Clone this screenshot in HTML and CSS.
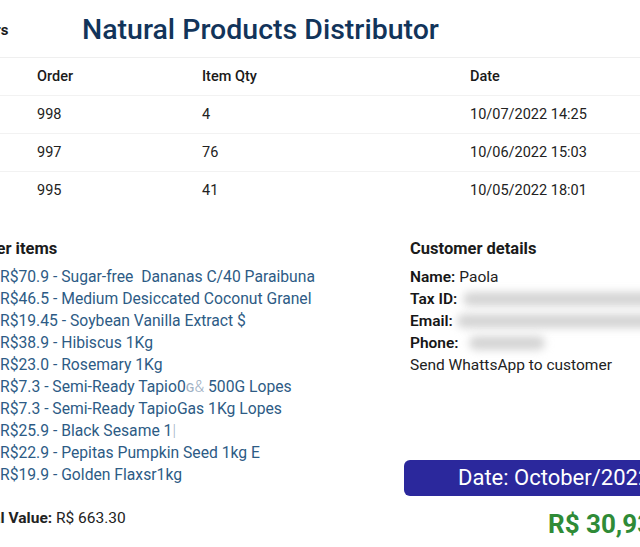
FILE: index.html
```html
<!DOCTYPE html>
<html>
<head>
<meta charset="utf-8">
<link rel="stylesheet" href="styles.css">
</head>
<body>
<div class="page">
  <header class="header">
    <span class="nav-label">Orders</span>
    <h1 class="title">Natural Products Distributor</h1>
  </header>
  <div class="table">
    <div class="row head">
      <span>Order</span><span>Item Qty</span><span>Date</span>
    </div>
    <div class="row">
      <span>998</span><span>4</span><span>10/07/2022 14:25</span>
    </div>
    <div class="row">
      <span>997</span><span>76</span><span>10/06/2022 15:03</span>
    </div>
    <div class="row">
      <span>995</span><span>41</span><span>10/05/2022 18:01</span>
    </div>
  </div>
  <div class="sections">
    <section class="left">
      <h2 class="heading">Order items</h2>
      <ul class="items">
        <li>R$70.9 - Sugar-free&nbsp; Dananas C/40 Paraibuna</li>
        <li>R$46.5 - Medium Desiccated Coconut Granel</li>
        <li>R$19.45 - Soybean Vanilla Extract $</li>
        <li>R$38.9 - Hibiscus 1Kg</li>
        <li>R$23.0 - Rosemary 1Kg</li>
        <li>R$7.3 - Semi-Ready Tapio0<span class="faint">ɢ&amp;</span> 500G Lopes</li>
        <li>R$7.3 - Semi-Ready TapioGas 1Kg Lopes</li>
        <li>R$25.9 - Black Sesame 1<span class="faint">|</span></li>
        <li>R$22.9 - Pepitas Pumpkin Seed 1kg E</li>
        <li>R$19.9 - Golden Flaxsr1kg</li>
      </ul>
      <p class="total"><b>Total Value:</b> R$ 663.30</p>
    </section>
    <section class="right">
      <div class="details">
        <h2 class="heading">Customer details</h2>
        <p class="line"><b>Name:</b> Paola</p>
        <p class="line"><b>Tax ID:</b> <span class="blur wide"></span></p>
        <p class="line"><b>Email:</b> <span class="blur wide2"></span></p>
        <p class="line"><b>Phone:</b> <span class="blur short"></span></p>
        <p class="line">Send WhattsApp to customer</p>
      </div>
      <div class="banner">Date: October/2022</div>
      <div class="amount">R$ 30,932.00</div>
    </section>
  </div>
</div>
</body>
</html>
```
FILE: styles.css
```css
html, body {
  margin: 0;
  padding: 0;
  background: #fff;
  overflow: hidden;
  width: 640px;
  height: 547px;
}
body {
  font-family: Roboto, "Liberation Sans", sans-serif;
  color: #1f1f1f;
}
.page {
  width: 900px;
  margin-left: -40px;
}
.header {
  display: flex;
  align-items: center;
  height: 57px;
  border-bottom: 1px solid #efefef;
}
.nav-label {
  width: 122px;
  font-size: 15px;
  font-weight: 700;
  color: #1b1b1b;
  text-indent: 3px;
  padding-top: 2px;
}
.title {
  margin: 0;
  padding-top: 2px;
  font-size: 28.5px;
  font-weight: 500;
  color: #12345a;
  letter-spacing: 0;
}
.table {
  display: flex;
  flex-direction: column;
}
.row {
  display: grid;
  grid-template-columns: 165px 268px 1fr;
  padding-left: 77px;
  height: 37px;
  align-items: center;
  font-size: 14.5px;
  color: #222;
  border-bottom: 1px solid #f2f2f2;
}
.row:last-child {
  border-bottom: none;
}
.row.head {
  font-weight: 500;
  color: #1a1a1a;
}
.sections {
  display: flex;
  margin-top: 29px;
}
.left {
  width: 434px;
  padding-left: 10px;
}
.right {
  flex: 1;
}
.heading {
  margin: 0;
  font-size: 16.5px;
  font-weight: 700;
  line-height: 22px;
  color: #1b1b1b;
}
.items {
  list-style: none;
  margin: 6px 0 0 0;
  padding: 0 0 0 30px;
  color: #2d5b85;
  font-size: 15.7px;
  line-height: 22px;
}
.items li {
  white-space: nowrap;
}
.faint {
  color: #9fb1c4;
  font-weight: 300;
}
.total {
  margin: 21px 0 0 0;
  font-size: 15.5px;
  line-height: 22px;
  color: #222;
}
.details {
  padding-left: 6px;
}
.details .heading {
  margin-bottom: 6px;
}
.line {
  margin: 0;
  font-size: 15.5px;
  line-height: 22px;
  color: #222;
  display: flex;
  align-items: center;
  gap: 4px;
  white-space: nowrap;
}
.line b {
  font-weight: 600;
  color: #161616;
}
.blur {
  display: inline-block;
  height: 14px;
  background: #d4d4d4;
  border-radius: 7px;
  filter: blur(4px);
}
.blur.wide { width: 200px; margin-left: 2px; }
.blur.wide2 { width: 200px; margin-left: 0; }
.blur.short { width: 76px; margin-left: 6px; }
.banner {
  margin-top: 84px;
  height: 36px;
  width: 320px;
  box-sizing: border-box;
  padding-left: 54px;
  background: #2b289c;
  border-radius: 6px;
  color: #fff;
  font-size: 22px;
  line-height: 36px;
  white-space: nowrap;
}
.amount {
  margin-top: 13px;
  padding-left: 144px;
  color: #2f8b37;
  font-size: 26px;
  font-weight: 700;
  line-height: 30px;
  white-space: nowrap;
}
```
